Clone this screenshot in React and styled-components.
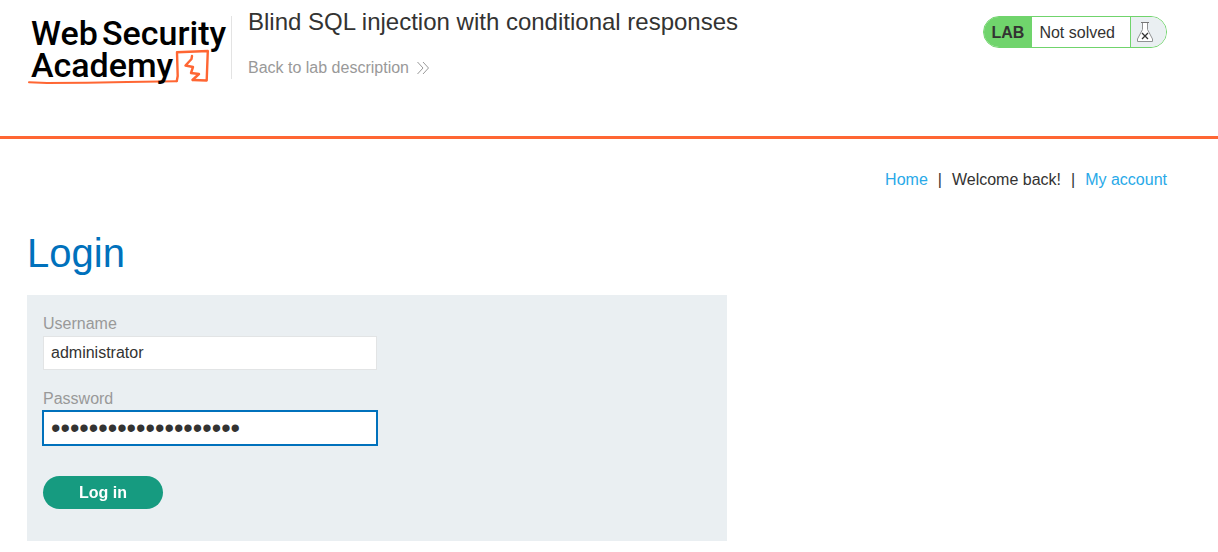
import React, { useState } from "react";
import styled, { createGlobalStyle } from "styled-components";

const GlobalStyle = createGlobalStyle`
  *, *::before, *::after { box-sizing: border-box; }
  body {
    margin: 0;
    background: #fff;
    color: #333332;
    font: 16px/24px "Liberation Sans", Arial, sans-serif;
  }
`;

const Header = styled.header`
  display: flex;
  align-items: flex-start;
  min-height: 139px;
  padding: 16px 51px 16px 27px;
  border-bottom: 3px solid #ff6633;
`;

const LogoLink = styled.a`
  flex: none;
  display: block;
  width: 204px;
  height: 70px;
  color: #000;
  text-decoration: none;
`;

const LogoDrawing = styled.svg`
  display: block;
  overflow: visible;
  font-family: Roboto, "Liberation Sans", sans-serif;
  font-weight: 500;
  font-size: 34px;
`;

const TitleBlock = styled.div`
  flex: 1;
  padding-left: 16px;
  border-left: 1px solid #e3e3e3;
`;

const LabTitle = styled.h2`
  margin: -8px 0 20px;
  font-size: 24px;
  line-height: 28px;
  font-weight: 400;
`;

const BackLink = styled.a`
  display: flex;
  width: fit-content;
  align-items: center;
  gap: 8px;
  color: #999;
  line-height: 22px;
  padding-top: 1px;
  text-decoration: none;
`;

const Status = styled.div`
  flex: none;
  display: flex;
  height: 32px;
  border: 1px solid #70d46c;
  border-radius: 16px;
  overflow: hidden;
  line-height: 32px;
`;

const StatusTag = styled.strong`
  padding: 0 8px;
  background: #70d46c;
`;

const StatusText = styled.span`
  padding: 0 15px 0 7px;
`;

const StatusIcon = styled.span`
  display: flex;
  padding: 5px 13px 0 6px;
  border-left: 1px solid #70d46c;
  background: #eaeff2;
`;

const Main = styled.main`
  padding: 29px 51px 11px 27px;
`;

const Nav = styled.nav`
  display: flex;
  justify-content: flex-end;
  gap: 10px;
`;

const NavLink = styled.a`
  color: #29a9e8;
  text-decoration: none;
`;

const Heading = styled.h1`
  margin: 37px 0 18px;
  color: #0071bc;
  font-size: 40px;
  line-height: 48px;
  font-weight: 400;
`;

const LoginForm = styled.form`
  max-width: 700px;
  padding: 16px 16px 32px;
  background: #eaeff2;
`;

const Field = styled.div`
  margin-bottom: 16px;
`;

const Label = styled.label`
  display: block;
  color: #999;
  line-height: 25px;
`;

const Input = styled.input`
  display: block;
  width: 334px;
  max-width: 100%;
  height: 34px;
  padding: 0 7px;
  border: 1px solid #e2e4e5;
  border-radius: 0;
  background: #fff;
  color: #333332;
  font: 16px "Liberation Sans", Arial, sans-serif;

  &:focus {
    border-color: #0071bc;
    outline: 1px solid #0071bc;
  }
`;

const PasswordInput = styled(Input)`
  font-size: 27px;
`;

const LoginButton = styled.button`
  display: block;
  width: 120px;
  height: 33px;
  margin-top: 31px;
  padding: 0;
  border: 0;
  border-radius: 17px;
  background: #169b80;
  color: #fff;
  font: 700 16px "Liberation Sans", Arial, sans-serif;
`;

function Logo() {
  return (
    <LogoLink href="#academy" aria-label="Web Security Academy">
      <LogoDrawing width="204" height="70" viewBox="0 0 204 70">
        <g fill="none" stroke="#ff6633" strokeLinejoin="round" strokeLinecap="round">
          <path d="M2 66.200 L20 67 L60 66.800 L100 66 L149.500 65.200" strokeWidth="2" />
          <path d="M149.800 65 L150.700 60 L150 36.300 L180.800 35 L179.700 64.500 L166 64" strokeWidth="2.400" />
          <path d="M165 40 L164.500 43 L158.500 49.500 L166 51 L164 57 L172 58 L165.500 64" strokeWidth="2.400" />
        </g>
        <text x="4" y="29" fill="#000">Web</text>
        <text x="75" y="29" fill="#000">Security</text>
        <text x="4" y="61" fill="#000">Academy</text>
      </LogoDrawing>
    </LogoLink>
  );
}

export default function App() {
  const [username, setUsername] = useState("administrator");
  const [password, setPassword] = useState("correcthorsebattery1");

  return (
    <>
      <GlobalStyle />
      <Header>
        <Logo />
        <TitleBlock>
          <LabTitle>Blind SQL injection with conditional responses</LabTitle>
          <BackLink href="#description">
            Back to lab description
            <svg width="12" height="14" viewBox="0 0 12 14" fill="none" stroke="#999" aria-hidden="true">
              <path d="M0.500 1 L6 7 L0.500 13 M6 1 L11.500 7 L6 13" />
            </svg>
          </BackLink>
        </TitleBlock>
        <Status>
          <StatusTag>LAB</StatusTag>
          <StatusText>Not solved</StatusText>
          <StatusIcon>
            <svg width="16" height="20" viewBox="0 0 16 20" fill="none" aria-hidden="true">
              <path d="M5.500 1 V7.500 L0.500 17 V19.500 H15.500 V17 L10.500 7.500 V1" fill="#fff" stroke="#909294" />
              <path d="M4 0.500 H12" stroke="#777" />
              <path d="M5 11 L11 17 M11 11 L5 17" stroke="#333" strokeWidth="1.300" />
            </svg>
          </StatusIcon>
        </Status>
      </Header>
      <Main>
        <Nav>
          <NavLink href="#home">Home</NavLink>
          <span>|</span>
          <span>Welcome back!</span>
          <span>|</span>
          <NavLink href="#account">My account</NavLink>
        </Nav>
        <Heading>Login</Heading>
        <LoginForm onSubmit={(e) => e.preventDefault()}>
          <Field>
            <Label htmlFor="username">Username</Label>
            <Input id="username" value={username} onChange={(e) => setUsername(e.target.value)} />
          </Field>
          <Field>
            <Label htmlFor="password">Password</Label>
            <PasswordInput
              id="password"
              type="password"
              autoFocus
              value={password}
              onChange={(e) => setPassword(e.target.value)}
            />
          </Field>
          <LoginButton type="submit">Log in</LoginButton>
        </LoginForm>
      </Main>
    </>
  );
}
